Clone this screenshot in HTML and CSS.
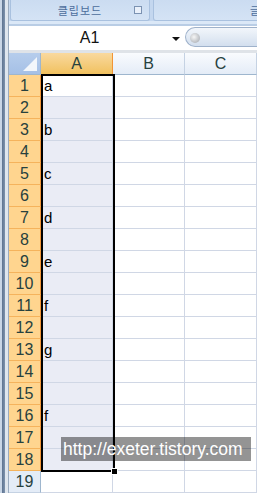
FILE: index.html
```html
<!DOCTYPE html>
<html lang="ko">
<head>
<meta charset="UTF-8" />
<meta name="viewport" content="width=device-width, initial-scale=1" />
<title>Excel 선택 영역</title>
<link rel="stylesheet" href="styles.css">
</head>
<body>

<div class="window">
  <div class="frame"></div>

  <div class="main">
    <!-- 리본 -->
    <div class="ribbon">
      <div class="group group-clip">
        <span class="group-label">클립보드</span>
        <span class="launcher"></span>
      </div>
      <div class="group group-font">
        <span class="group-label">글꼴</span>
      </div>
    </div>

    <!-- 이름 상자 / 수식 입력줄 -->
    <div class="namebar">
      <div class="namebox">
        <span class="name">A1</span>
        <span class="arrow"></span>
      </div>
      <div class="formula">
        <span class="knob"></span>
      </div>
    </div>
    <div class="gap"></div>

    <!-- 시트 -->
    <div class="sheet">
      <div class="corner"></div>
      <div class="colhead sel">A</div>
      <div class="colhead">B</div>
      <div class="colhead">C</div>

      <div class="rowhead sel">1</div><div class="cell active">a</div><div class="cell"></div><div class="cell"></div>
      <div class="rowhead sel">2</div><div class="cell tint"></div><div class="cell"></div><div class="cell"></div>
      <div class="rowhead sel">3</div><div class="cell tint">b</div><div class="cell"></div><div class="cell"></div>
      <div class="rowhead sel">4</div><div class="cell tint"></div><div class="cell"></div><div class="cell"></div>
      <div class="rowhead sel">5</div><div class="cell tint">c</div><div class="cell"></div><div class="cell"></div>
      <div class="rowhead sel">6</div><div class="cell tint"></div><div class="cell"></div><div class="cell"></div>
      <div class="rowhead sel">7</div><div class="cell tint">d</div><div class="cell"></div><div class="cell"></div>
      <div class="rowhead sel">8</div><div class="cell tint"></div><div class="cell"></div><div class="cell"></div>
      <div class="rowhead sel">9</div><div class="cell tint">e</div><div class="cell"></div><div class="cell"></div>
      <div class="rowhead sel">10</div><div class="cell tint"></div><div class="cell"></div><div class="cell"></div>
      <div class="rowhead sel">11</div><div class="cell tint">f</div><div class="cell"></div><div class="cell"></div>
      <div class="rowhead sel">12</div><div class="cell tint"></div><div class="cell"></div><div class="cell"></div>
      <div class="rowhead sel">13</div><div class="cell tint">g</div><div class="cell"></div><div class="cell"></div>
      <div class="rowhead sel">14</div><div class="cell tint"></div><div class="cell"></div><div class="cell"></div>
      <div class="rowhead sel">15</div><div class="cell tint"></div><div class="cell"></div><div class="cell"></div>
      <div class="rowhead sel">16</div><div class="cell tint">f</div><div class="cell"></div><div class="cell"></div>
      <div class="rowhead sel">17</div><div class="cell tint"></div><div class="cell"></div><div class="cell"></div>
      <div class="rowhead sel">18</div><div class="cell tint"></div><div class="cell"></div><div class="cell"></div>
      <div class="rowhead">19</div><div class="cell"></div><div class="cell"></div><div class="cell"></div>

      <!-- 선택 테두리 -->
      <div class="selection"><span class="handle"></span></div>
      <div class="watermark">http://exeter.tistory.com</div>
    </div>
  </div>
</div>

</body>
</html>
```

FILE: styles.css
```css
body {
  margin: 0;
  padding: 0;
  width: 257px;
  height: 493px;
  overflow: hidden;
  font-family: "Liberation Sans", Arial, "Noto Sans CJK KR", sans-serif;
  background: #fff;
}
.window {
  display: flex;
  height: 493px;
}
.frame {
  width: 9px;
  flex: none;
  background: linear-gradient(to right, #c9d6e6 0, #c9d6e6 2px, #5d7390 2px, #7e93ad 5px, #dfe6ee 5px, #dfe6ee 8px, #9aabbf 8px);
}
.main {
  flex: 1;
  min-width: 0;
  display: flex;
  flex-direction: column;
}

/* ribbon */
.ribbon {
  height: 26px;
  display: flex;
  gap: 3px;
  padding-left: 1px;
  box-sizing: border-box;
  background: linear-gradient(to bottom, #c4d7ef 0, #c4d7ef 21px, #dbe8f7 21px, #dbe8f7 24px, #b9cde5 24px);
  overflow: hidden;
}
.group {
  height: 21px;
  flex: none;
  box-sizing: border-box;
  background: linear-gradient(to bottom, #cbdcf1, #d4e3f5);
  border: 1px solid #a9c1df;
  border-top: none;
  border-radius: 0 0 3px 3px;
  display: flex;
  align-items: center;
  justify-content: center;
  position: relative;
}
.group-clip {
  width: 140px;
}
.group-font {
  width: 140px;
  justify-content: flex-start;
  padding-left: 96px;
}
.group-label {
  font-size: 11px;
  color: #4c6d9c;
  letter-spacing: 1px;
}
.launcher {
  position: absolute;
  right: 7px;
  top: 6px;
  width: 6px;
  height: 6px;
  border: 1px solid #7b92b2;
  background: #e9f0fa;
}

/* name box */
.namebar {
  height: 24px;
  display: flex;
  background: #fff;
}
.namebox {
  width: 176px;
  display: flex;
  align-items: center;
  position: relative;
}
.name {
  flex: 1;
  text-align: center;
  font-size: 16px;
  color: #111;
  padding-right: 2px;
}
.arrow {
  width: 0;
  height: 0;
  border-left: 4px solid transparent;
  border-right: 4px solid transparent;
  border-top: 4px solid #111;
  margin-right: 5px;
  margin-top: 1px;
}
.formula {
  flex: 1;
  margin: 1px 0 3px 0;
  border: 1px solid #9fb2cb;
  border-right: none;
  border-radius: 11px 0 0 11px;
  background: linear-gradient(to bottom, #f2f6fb, #d3dfee);
  position: relative;
}
.knob {
  position: absolute;
  left: 4px;
  top: 5px;
  width: 10px;
  height: 10px;
  border-radius: 50%;
  background: radial-gradient(circle at 40% 40%, #f6f6f6, #9ea3aa);
}
.gap {
  height: 3px;
  background: #dfe3e8;
}

/* sheet */
.sheet {
  flex: 1;
  display: grid;
  grid-template-columns: 32px 72px 72px 72px;
  grid-auto-rows: 22px;
  position: relative;
  font-size: 15px;
}
.corner {
  box-sizing: border-box;
  background: linear-gradient(to bottom, #b6cdec, #a5c0e6);
  border-right: 1px solid #9eb6ce;
  border-bottom: 1px solid #9eb6ce;
  position: relative;
}
.corner::after {
  content: "";
  position: absolute;
  right: 3px;
  bottom: 3px;
  border-left: 14px solid transparent;
  border-bottom: 14px solid #f2f6fb;
}
.colhead {
  box-sizing: border-box;
  background: linear-gradient(to bottom, #f9fbfe, #e4ecf7);
  border-right: 1px solid #c5d2e3;
  border-bottom: 1px solid #9eb6ce;
  display: flex;
  align-items: center;
  justify-content: center;
  color: #27413e;
  font-size: 16px;
}
.colhead.sel {
  background: linear-gradient(to bottom, #f9d99f, #f1c15f);
  border-right: 1px solid #f29536;
  border-bottom: 1px solid #f29536;
}
.rowhead {
  box-sizing: border-box;
  background: #e4ecf7;
  border-right: 1px solid #9eb6ce;
  border-bottom: 1px solid #c5d2e3;
  display: flex;
  align-items: center;
  justify-content: center;
  color: #27413e;
  font-size: 16px;
}
.rowhead.sel {
  background: #ffd58f;
  border-right: 1px solid #f29536;
  border-bottom: 1px solid #f5b35c;
}
.cell {
  box-sizing: border-box;
  border-right: 1px solid #d0d7e5;
  border-bottom: 1px solid #d0d7e5;
  padding-left: 3px;
  display: flex;
  align-items: center;
  color: #000;
}
.cell.tint {
  background: #eaecf5;
}
.cell.active {
  background: #fff;
}
.selection {
  position: absolute;
  left: 32px;
  top: 21px;
  width: 74px;
  height: 398px;
  box-sizing: border-box;
  border: 2px solid #000;
  pointer-events: none;
}
.handle {
  position: absolute;
  right: -5px;
  bottom: -5px;
  width: 5px;
  height: 5px;
  background: #000;
  border: 1px solid #fff;
}
.watermark {
  position: absolute;
  left: 52px;
  top: 384px;
  width: 190px;
  height: 24px;
  background: rgba(0, 0, 0, 0.42);
  color: #fff;
  font-size: 17.5px;
  line-height: 24px;
  padding-left: 2px;
  box-sizing: border-box;
  white-space: nowrap;
}
```
